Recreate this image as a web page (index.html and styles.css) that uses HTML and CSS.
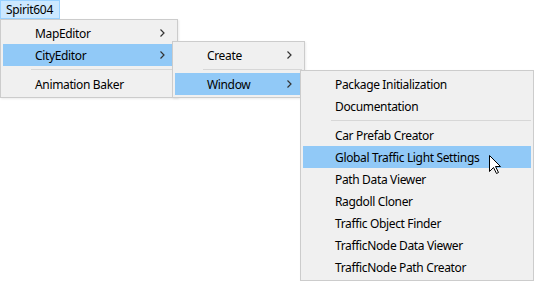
FILE: index.html
```html
<!DOCTYPE html>
<html>
	<head>
		<meta charset="utf-8"/>
		<link rel="stylesheet" href="styles.css">
	</head>
	<body>
		<div class="stage">
			<div class="menubar">
				<div class="top open">Spirit604</div>
			</div>

			<div class="menu m1">
				<div class="item">MapEditor<svg class="arrow" width="5" height="8" viewBox="0 0 5 8"><path d="M0.5 0.5 L4 4 L0.5 7.5"/></svg></div>
				<div class="item hot">CityEditor<svg class="arrow" width="5" height="8" viewBox="0 0 5 8"><path d="M0.5 0.5 L4 4 L0.5 7.5"/></svg></div>
				<div class="sep"></div>
				<div class="item">Animation Baker</div>
			</div>

			<div class="menu m2">
				<div class="item">Create<svg class="arrow" width="5" height="8" viewBox="0 0 5 8"><path d="M0.5 0.5 L4 4 L0.5 7.5"/></svg></div>
				<div class="sep"></div>
				<div class="item hot">Window<svg class="arrow" width="5" height="8" viewBox="0 0 5 8"><path d="M0.5 0.5 L4 4 L0.5 7.5"/></svg></div>
			</div>

			<div class="menu m3">
				<div class="item">Package Initialization</div>
				<div class="item">Documentation</div>
				<div class="sep"></div>
				<div class="item">Car Prefab Creator</div>
				<div class="item hot">Global Traffic Light Settings</div>
				<div class="item">Path Data Viewer</div>
				<div class="item">Ragdoll Cloner</div>
				<div class="item">Traffic Object Finder</div>
				<div class="item">TrafficNode Data Viewer</div>
				<div class="item">TrafficNode Path Creator</div>
			</div>

			<!-- mouse pointer -->
			<svg class="cursor" width="13" height="20" viewBox="0 0 13 20">
				<path d="M0.5 0.5 L0.5 16.5 L4.5 12.5 L7.5 18.5 L9.5 17.5 L6.5 11.5 L11.5 11.5 Z" fill="#fff" stroke="#000" stroke-width="1"/>
			</svg>
		</div>
	</body>
</html>
```

FILE: styles.css
```css
body{
	margin:0;
	background:#fff;
	font-family:"Noto Sans","Liberation Sans",sans-serif;
	font-size:12px;
	letter-spacing:-0.35px;
	color:#000;
}
.stage{
	position:relative;
	width:534px;
	height:281px;
	overflow:hidden;
}

.menubar{
	display:flex;
	height:19px;
}
.top{
	box-sizing:border-box;
	height:19px;
	width:60px;
	padding:0 5px;
	display:flex;
	align-items:center;
}
.top.open{
	background:#cce8ff;
	border:1px solid #99d1ff;
}

/* popup menus sit over each other */
.menu{
	position:absolute;
	box-sizing:border-box;
	background:#f0f0f0;
	border:1px solid #ccc;
	padding:2px;
	display:flex;
	flex-direction:column;
	box-shadow:1px 1px 2px rgba(0,0,0,0.08);
}
.m1{ left:0; top:19px; width:178px; z-index:1; }
.m2{ left:172px; top:41px; width:133px; z-index:2; }
.m3{ left:300px; top:70px; width:234px; z-index:3; }

.item{
	height:22px;
	display:flex;
	align-items:center;
	padding-left:32px;
	padding-right:10px;
	white-space:nowrap;
}
.item.hot{
	background:#91c9f7;
}
.arrow{
	margin-left:auto;
}
.arrow path{
	fill:none;
	stroke:#333;
	stroke-width:1.2;
}
.sep{
	height:1px;
	margin:3px 0 3px 28px;
	background:#d7d7d7;
}

.cursor{
	position:absolute;
	left:489px;
	top:155px;
	z-index:5;
}
```
